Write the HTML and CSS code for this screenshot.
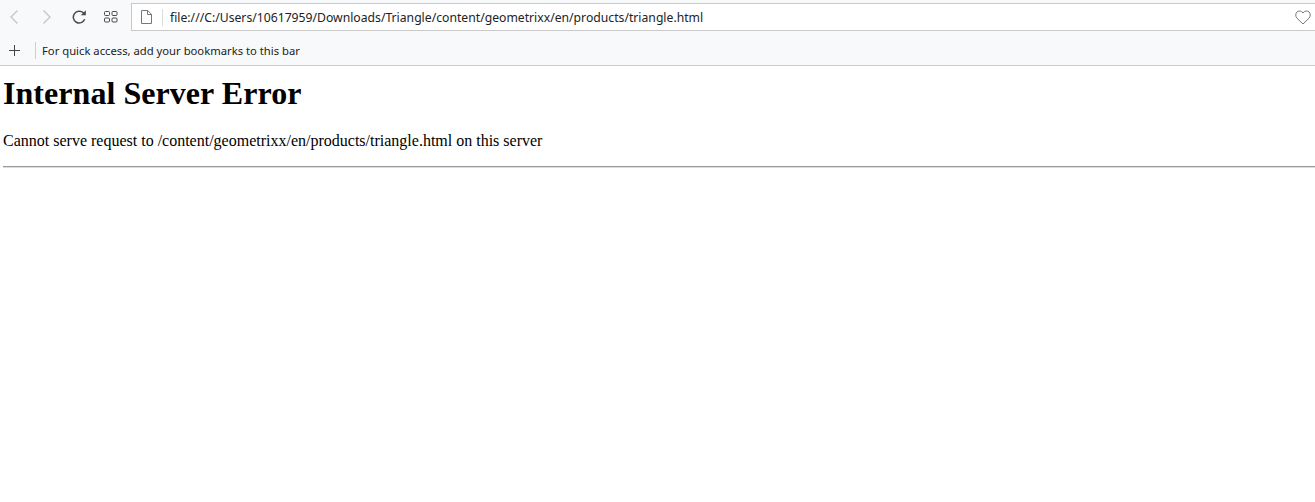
FILE: index.html
```html
<!DOCTYPE html>
<html lang="en">
<head>
<meta charset="utf-8">
<title>Internal Server Error</title>
<link rel="stylesheet" href="styles.css">
</head>
<body>
<header class="browser">
  <div class="toolbar">
    <div class="nav">
      <svg class="icon back" width="8" height="14" viewBox="0 0 8 14"><path d="M7.500.5 1 7l6.500 6.500" fill="none" stroke="#c4c6ca" stroke-width="1.4"/></svg>
      <svg class="icon forward" width="8" height="14" viewBox="0 0 8 14"><path d="M.5.5 7 7 .5 13.500" fill="none" stroke="#c4c6ca" stroke-width="1.4"/></svg>
      <svg class="icon reload" width="14" height="14" viewBox="0 0 14 14"><path d="M12.700 9.300A5.900 5.900 0 1 1 11.300 2.800L12.800 4.400" fill="none" stroke="#4a4a4a" stroke-width="1.5"/><path d="M13.800.3v5h-5z" fill="#4a4a4a"/></svg>
      <svg class="icon tabs" width="14" height="12" viewBox="0 0 14 12"><g fill="none" stroke="#4a4a4a" stroke-width="1"><rect x=".5" y=".5" width="5" height="4" rx="1"/><rect x="8" y=".5" width="5" height="4" rx="1"/><rect x=".5" y="7" width="5" height="4" rx="1"/><rect x="8" y="7" width="5" height="4" rx="1"/></g></svg>
    </div>
    <div class="address">
      <svg class="page" width="11" height="14" viewBox="0 0 11 14"><path d="M.5.5h6.200l3.800 3.800v9.200H.5zM6.500.5v4h4" fill="none" stroke="#777" stroke-width="1"/></svg>
      <span class="sep"></span>
      <span class="url">file:///C:/Users/10617959/Downloads/Triangle/content/geometrixx/en/products/triangle.html</span>
      <svg class="heart" width="16" height="15" viewBox="0 0 16 15"><path d="M8 14 2 8.200C.2 6.300.4 3.400 2.100 1.900 3.900.4 6.500.8 8 3c1.500-2.200 4.100-2.600 5.900-1.100 1.700 1.500 1.900 4.400.1 6.300z" fill="none" stroke="#777" stroke-width="1"/></svg>
    </div>
  </div>
  <div class="bookmarks">
    <svg class="plus" width="11" height="11" viewBox="0 0 11 11"><path d="M5.500 0v11M0 5.500h11" stroke="#444" stroke-width="1"/></svg>
    <span class="sep tall"></span>
    <span class="hint">For quick access, add your bookmarks to this bar</span>
  </div>
</header>
<main class="content">
  <h1>Internal Server Error</h1>
  <p>Cannot serve request to /content/geometrixx/en/products/triangle.html on this server</p>
  <hr>
</main>
</body>
</html>
```
FILE: styles.css
```css
* { box-sizing: border-box; }
html, body { margin: 0; padding: 0; background: #fff; }
body { height: 502px; overflow: hidden; }
.browser { background: #f8f9fb; border-bottom: 1px solid #c9c9c9; height: 66px; }
.toolbar { display: flex; align-items: flex-start; height: 35px; padding-top: 3px; }
.nav { display: flex; align-items: center; width: 131px; flex: none; height: 27px; padding-left: 10px; }
.icon { flex: none; }
.forward { margin-left: 25px; }
.reload { margin-left: 21px; }
.tabs { margin-left: 18px; }
.address { flex: 1; display: flex; align-items: center; height: 28px; background: #fff; border: 1px solid #c9c9c9; border-right: 0; padding-left: 9px; }
.page { flex: none; }
.sep { width: 1px; height: 17px; background: #dcdcdc; flex: none; margin-left: 10px; }
.url { font: 12.2px "Noto Sans", "Open Sans", sans-serif; color: #222; margin-left: 7px; flex: 1; white-space: nowrap; }
.heart { flex: none; margin-right: 4px; }
.bookmarks { display: flex; align-items: center; height: 30px; padding-left: 9px; }
.plus { flex: none; }
.sep.tall { margin-left: 15px; background: #cfcfcf; }
.hint { font: 11.26px "Noto Sans", "Open Sans", sans-serif; color: #222; margin-left: 6px; white-space: nowrap; }
.content { padding: 0 0 0 3px; font-family: "Liberation Serif", "Times New Roman", serif; color: #000; }
h1 { font-size: 32px; line-height: 37px; font-weight: bold; letter-spacing: 0.05px; margin: 9px 0 0; }
p { font-size: 16px; line-height: 18px; margin: 20px 0 0; }
hr { margin: 16px 0 0; border: 0; border-top: 1px solid #999; border-bottom: 1px solid #ddd; height: 2px; }
```
